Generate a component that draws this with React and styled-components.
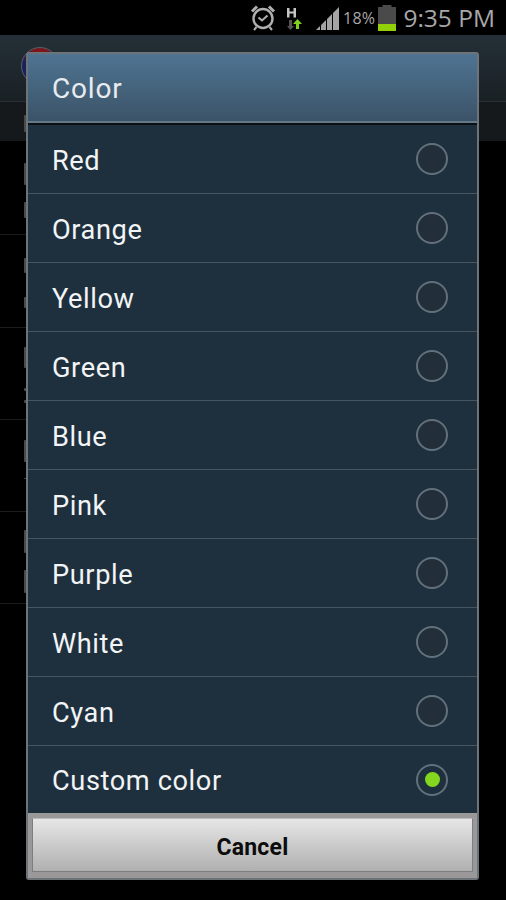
import React from "react";
import styled, { createGlobalStyle } from "styled-components";

const GlobalStyle = createGlobalStyle`
  html, body {
    margin: 0;
    padding: 0;
    background: #000;
    font-family: "Roboto", "Liberation Sans", sans-serif;
  }
`;

const Screen = styled.div`
  position: relative;
  width: 506px;
  height: 900px;
  overflow: hidden;
  background: #000;
`;

const StatusBar = styled.div`
  height: 35px;
  background: #000;
  display: flex;
  align-items: center;
  justify-content: flex-end;
  padding-right: 11px;
  box-sizing: border-box;
  color: #a8a8a8;
`;

const StatusIcon = styled.div`
  display: flex;
  margin-left: ${(p) => p.$gap}px;
`;

const StatusPercent = styled.span`
  font-family: "Open Sans", sans-serif;
  font-size: 16px;
  margin-left: 4px;
  letter-spacing: 0.3px;
`;

const StatusTime = styled.span`
  font-family: "Open Sans", sans-serif;
  font-size: 24.5px;
  margin-left: 7px;
`;

const AppBar = styled.div`
  height: 67px;
  padding: 12px 0 0 21px;
  background: linear-gradient(#242f37, #1a2125);
  border-bottom: 1px solid #2b3036;
  box-sizing: border-box;
`;

const Avatar = styled.div`
  width: 38px;
  height: 38px;
  box-sizing: border-box;
  border-radius: 50%;
  border: 1px solid #5a6066;
  background: radial-gradient(circle at 50% 25%, #7a161c 0 28%, #16225a 52%);
`;

const SubBar = styled.div`
  height: 39px;
  padding-top: 13px;
  box-sizing: border-box;
  background: #15191c;
`;

const ListRow = styled.div`
  display: flex;
  flex-direction: column;
  height: ${(p) => p.$height}px;
  width: 27px;
  border-bottom: 1px solid #1c1c1c;
  box-sizing: border-box;
`;

const Stub = styled.div`
  flex-shrink: 0;
  width: 3px;
  height: ${(p) => p.$height}px;
  margin: ${(p) => p.$top}px 0 0 24px;
  background: #4a4a4a;
  border-radius: 1px 0 0 1px;
`;

const Dialog = styled.div`
  position: absolute;
  left: 26px;
  top: 52px;
  width: 453px;
  height: 828px;
  box-sizing: border-box;
  border: 2px solid #6d7479;
  border-radius: 3px;
  display: flex;
  flex-direction: column;
  background: #1e303e;
`;

const Title = styled.div`
  height: 71px;
  flex-shrink: 0;
  box-sizing: border-box;
  padding-left: 24px;
  display: flex;
  align-items: center;
  color: #e8ecef;
  font-size: 28px;
  letter-spacing: 0.8px;
  background: linear-gradient(#4e7492, #3b5266);
  border-bottom: 2px solid #0c1013;
  box-shadow: inset 0 -2px 0 #64798a;
`;

const Options = styled.div`
  flex: 1;
  display: flex;
  flex-direction: column;
`;

const Option = styled.div`
  height: 69px;
  flex-shrink: 0;
  box-sizing: border-box;
  padding: 0 29px 0 24px;
  display: flex;
  align-items: center;
  justify-content: space-between;
  color: #f2f4f5;
  font-size: 27.2px;
  letter-spacing: 0.6px;
  border-bottom: 1px solid #465561;
  &:last-child {
    border-bottom: none;
    height: 67px;
  }
`;

const OptionLabel = styled.span`
  padding-top: 3px;
`;

const Radio = styled.div`
  width: 32px;
  height: 32px;
  box-sizing: border-box;
  border-radius: 50%;
  border: 2px solid #62707b;
  background: ${(p) => (p.$checked ? "transparent" : "#222e39")};
  display: flex;
  align-items: center;
  justify-content: center;
  &::after {
    content: "";
    display: ${(p) => (p.$checked ? "block" : "none")};
    width: 15px;
    height: 15px;
    border-radius: 50%;
    background: #84d61e;
  }
`;

const Footer = styled.div`
  height: 65px;
  flex-shrink: 0;
  background: #9a9899;
  padding: 5px 4px 0 4px;
  box-sizing: border-box;
`;

const CancelButton = styled.button`
  display: block;
  width: 100%;
  height: 54px;
  box-sizing: border-box;
  border: 1px solid #7d7d7d;
  border-top-color: #bcbcbc;
  border-radius: 1px;
  background: linear-gradient(#e6e6e6, #b0b0b0);
  color: #0c0c0c;
  font-family: "Roboto", sans-serif;
  font-weight: 700;
  font-size: 23px;
  letter-spacing: 0.2px;
  padding: 5px 0 0;
`;

const AlarmIcon = () => (
  <svg width="26" height="27" viewBox="0 0 26 27" fill="none" stroke="#b0b0b0">
    <circle cx="13" cy="14.500" r="9.500" strokeWidth="2.400" />
    <path d="M8.500 13.500l3.500 3 5.500-5" strokeWidth="2" />
    <path d="M2 7.500l5-5M24 7.500l-5-5" strokeWidth="3" />
    <path d="M6.500 23l-2.500 3M19.500 23l2.500 3" strokeWidth="2" />
  </svg>
);

const DataIcon = () => (
  <svg width="16" height="26" viewBox="0 0 16 26">
    <path d="M0 3h2.500v3.500h4V3H9v9.500H6.500V8.500h-4v4H0z" fill="#c4c4c4" />
    <path d="M3.500 25l-3.500-4h2v-6h3v6h2z" fill="#555" />
    <path d="M10.500 14l4.500 5h-3v5h-3v-5H6z" fill="#7fcf1d" />
  </svg>
);

const SignalIcon = () => (
  <svg width="23" height="24" viewBox="0 0 23 24" fill="#a4a4a4">
    <path d="M0 24l4-4v4zM5 24v-5l5-5v10zM11 24V13l5-5v16zM17 24V7l6-6v23z" />
  </svg>
);

const BatteryIcon = () => (
  <svg width="18" height="26" viewBox="0 0 18 26">
    <rect x="4.500" y="0" width="9" height="2.500" fill="#4a4a4a" />
    <rect x="0" y="2" width="18" height="17" fill="#4a4a4a" />
    <rect x="0" y="19" width="18" height="7" fill="#93cf06" />
  </svg>
);

const colors = ["Red", "Orange", "Yellow", "Green", "Blue", "Pink", "Purple", "White", "Cyan", "Custom color"];

// bits of the list behind the dialog that peek out on its left edge
const listRows = [
  { height: 94, stubs: [{ top: 22, height: 22 }, { top: 17, height: 16 }] },
  { height: 93, stubs: [{ top: 23, height: 15 }, { top: 24, height: 11 }] },
  { height: 92, stubs: [{ top: 19, height: 21 }, { top: 20, height: 3 }, { top: 9, height: 3 }] },
  { height: 92, stubs: [{ top: 20, height: 22 }, { top: 16, height: 1 }] },
  { height: 92, stubs: [{ top: 18, height: 23 }, { top: 17, height: 23 }] },
];

export default function App() {
  return (
    <Screen>
      <GlobalStyle />
      <StatusBar>
        <AlarmIcon />
        <StatusIcon $gap={11}>
          <DataIcon />
        </StatusIcon>
        <StatusIcon $gap={13}>
          <SignalIcon />
        </StatusIcon>
        <StatusPercent>18%</StatusPercent>
        <StatusIcon $gap={3}>
          <BatteryIcon />
        </StatusIcon>
        <StatusTime>9:35 PM</StatusTime>
      </StatusBar>
      <AppBar>
        <Avatar />
      </AppBar>
      <SubBar>
        <Stub $top={0} $height={17} />
      </SubBar>
      {listRows.map((row, i) => (
        <ListRow key={i} $height={row.height}>
          {row.stubs.map((stub, j) => (
            <Stub key={j} $top={stub.top} $height={stub.height} />
          ))}
        </ListRow>
      ))}
      <Dialog>
        <Title>Color</Title>
        <Options>
          {colors.map((name) => (
            <Option key={name}>
              <OptionLabel>{name}</OptionLabel>
              <Radio $checked={name === "Custom color"} />
            </Option>
          ))}
        </Options>
        <Footer>
          <CancelButton>Cancel</CancelButton>
        </Footer>
      </Dialog>
    </Screen>
  );
}
